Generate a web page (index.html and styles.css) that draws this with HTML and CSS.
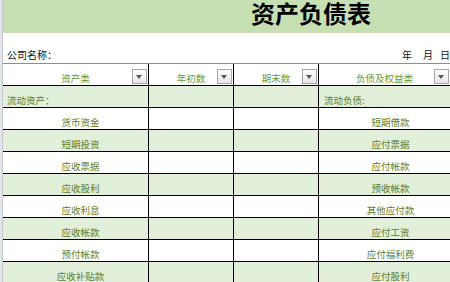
FILE: index.html
```html
<!DOCTYPE html>
<html lang="zh-CN">
<head>
<meta charset="utf-8">
<title>资产负债表</title>
<link rel="stylesheet" href="styles.css">
</head>
<body>
<div class="sheet">
  <div class="gutter"></div>
  <div class="main">
    <div class="title">资产负债表</div>
    <div class="meta">
      <span class="company">公司名称：</span>
      <span class="date"><span class="y">年</span><span class="m">月</span><span class="d">日</span></span>
    </div>
    <div class="table">
      <div class="row head">
        <div class="cell">资产类<span class="btn"></span></div>
        <div class="cell">年初数<span class="btn"></span></div>
        <div class="cell">期末数<span class="btn"></span></div>
        <div class="cell">负债及权益类<span class="btn"></span></div>
      </div>
      <div class="row g">
        <div class="cell a left">流动资产：</div><div class="cell"></div><div class="cell"></div><div class="cell d left">流动负债:</div>
      </div>
      <div class="row">
        <div class="cell a">货币资金</div><div class="cell"></div><div class="cell"></div><div class="cell d">短期借款</div>
      </div>
      <div class="row g">
        <div class="cell a">短期投资</div><div class="cell"></div><div class="cell"></div><div class="cell d">应付票据</div>
      </div>
      <div class="row">
        <div class="cell a">应收票据</div><div class="cell"></div><div class="cell"></div><div class="cell d">应付帐款</div>
      </div>
      <div class="row g">
        <div class="cell a">应收股利</div><div class="cell"></div><div class="cell"></div><div class="cell d">预收帐款</div>
      </div>
      <div class="row">
        <div class="cell a">应收利息</div><div class="cell"></div><div class="cell"></div><div class="cell d">其他应付款</div>
      </div>
      <div class="row g">
        <div class="cell a">应收帐款</div><div class="cell"></div><div class="cell"></div><div class="cell d">应付工资</div>
      </div>
      <div class="row">
        <div class="cell a">预付帐款</div><div class="cell"></div><div class="cell"></div><div class="cell d">应付福利费</div>
      </div>
      <div class="row g">
        <div class="cell a">应收补贴款</div><div class="cell"></div><div class="cell"></div><div class="cell d">应付股利</div>
      </div>
    </div>
  </div>
</div>
</body>
</html>
```

FILE: styles.css
```css
html, body {
  margin: 0;
  padding: 0;
  background: #ffffff;
}
body {
  width: 450px;
  height: 282px;
  overflow: hidden;
  font-family: "Noto Sans CJK SC", "Noto Sans", sans-serif;
}
.sheet {
  display: flex;
  width: 450px;
  height: 282px;
  overflow: hidden;
}
.gutter {
  flex: 0 0 2px;
  background: #e3e6ea;
  border-right: 1px solid #c3c7cc;
}
.main {
  flex: 0 0 447px;
  width: 447px;
  overflow: hidden;
}
.title {
  height: 33px;
  background: #c6e0b4;
  font-size: 24px;
  font-weight: 700;
  line-height: 25px;
  color: #000;
  padding-left: 248px;
  white-space: nowrap;
}
.meta {
  height: 30px;
  box-sizing: border-box;
  display: flex;
  align-items: flex-end;
  padding: 0 0 2px 4px;
  font-size: 10px;
  line-height: 12px;
  color: #111;
}
.company {
  flex: 0 0 auto;
}
.date {
  margin-left: auto;
  display: flex;
}
.date .m { margin-left: 11px; }
.date .d { margin-left: 7px; }
.table {
  display: flex;
  flex-direction: column;
  gap: 1px;
  background: #000;
  border-top: 1px solid #70ad47;
}
.row {
  display: grid;
  grid-template-columns: 145px 84px 84px 131px;
  column-gap: 1px;
  height: 21px;
}
.cell {
  position: relative;
  background: #ffffff;
  display: flex;
  align-items: flex-end;
  justify-content: center;
  box-sizing: border-box;
  padding-bottom: 1px;
  font-size: 9.5px;
  line-height: 12px;
  color: #5d7d2a;
  white-space: nowrap;
}
.row.g .cell {
  background: #e2efda;
}
.row.head .cell {
  color: #6b9b30;
}
.cell.a {
  padding-left: 10px;
}
.cell.d {
  padding-left: 12px;
}
.cell.left {
  justify-content: flex-start;
}
.cell.a.left {
  padding-left: 4px;
}
.cell.d.left {
  padding-left: 5px;
}
.btn {
  position: absolute;
  right: 1px;
  bottom: 1px;
  width: 15px;
  height: 15px;
  box-sizing: border-box;
  border: 1px solid #a6a6a6;
  background: linear-gradient(#ffffff, #e6e6e6);
}
.btn::after {
  content: "";
  position: absolute;
  left: 3px;
  top: 5px;
  border-left: 3.5px solid transparent;
  border-right: 3.5px solid transparent;
  border-top: 4px solid #555;
}
```
